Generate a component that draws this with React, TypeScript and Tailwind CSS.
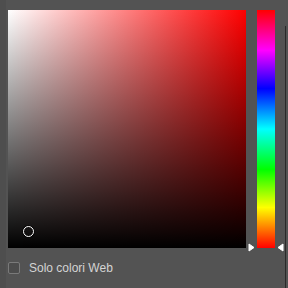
export default function App() {
  return (
    <div className="relative w-[288px] h-[288px] overflow-hidden bg-[#535353] pl-2 pt-[10px]" style={{ fontFamily: '"Liberation Sans", Arial, sans-serif' }}>
      <div className="absolute left-0 top-0 h-full w-[6px] bg-[#4e4e4e]" />
      <div className="absolute left-[285px] top-[26px] h-full w-[1px] bg-[#2a2a2a]" />
      <div className="relative flex gap-[11px]">
        <div className="relative w-[238px] h-[238px] bg-[linear-gradient(to_top,#000,transparent),linear-gradient(to_right,#fff,#f00)]">
          <div className="absolute left-[15px] top-[216px] w-[11px] h-[11px] rounded-full border border-white shadow-[0_0_0_1px_rgba(0,0,0,0.5)]" />
        </div>
        <div className="w-[18px] h-[238px] bg-[linear-gradient(to_bottom,#f00,#f0f_17%,#00f_33%,#0ff_50%,#0f0_67%,#ff0_83%,#f00)]" />
        <svg className="absolute left-[240px] top-[233px]" width="7" height="9" viewBox="0 0 7 9">
          <path d="M1 1 L6 4.5 L1 8 Z" fill="#fff" stroke="#fff" strokeWidth="1" strokeLinejoin="round" />
        </svg>
        <svg className="absolute left-[269px] top-[233px]" width="7" height="9" viewBox="0 0 7 9">
          <path d="M6 1 L1 4.5 L6 8 Z" fill="#fff" stroke="#fff" strokeWidth="1" strokeLinejoin="round" />
        </svg>
      </div>
      <div className="mt-[14px] flex items-center gap-[9px]">
        <div className="w-[12px] h-[12px] rounded-[2px] border border-[#7a7a7a] bg-[#4c4c4c]" />
        <span className="text-[12px] text-[#d4d4d4] leading-none">Solo colori Web</span>
      </div>
    </div>
  );
}
